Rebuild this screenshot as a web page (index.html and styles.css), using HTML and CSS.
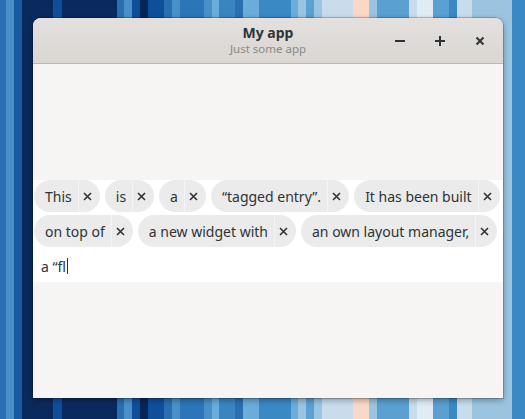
FILE: index.html
```html
<!DOCTYPE html>
<html lang="en">
<head>
<meta charset="utf-8">
<title>My app</title>
<link rel="stylesheet" href="styles.css">
</head>
<body>
<div class="window">
  <header class="headerbar">
    <div class="titles">
      <div class="title">My app</div>
      <div class="subtitle">Just some app</div>
    </div>
    <div class="controls">
      <span class="ctl"><svg width="12" height="12" viewBox="0 0 12 12"><path d="M1 6h10" stroke="#2e3436" stroke-width="2"/></svg></span>
      <span class="ctl"><svg width="12" height="12" viewBox="0 0 12 12"><path d="M1 6h10M6 1v10" stroke="#2e3436" stroke-width="2"/></svg></span>
      <span class="ctl"><svg width="10" height="10" viewBox="0 0 10 10"><path d="M1.5 1.5l7 7M8.5 1.5l-7 7" stroke="#2e3436" stroke-width="2"/></svg></span>
    </div>
  </header>
  <main class="content">
    <div class="band">
      <div class="tags">
        <div class="tag"><span class="label">This</span><span class="rm"><svg width="9" height="9" viewBox="0 0 9 9"><path d="M1 1l7 7M8 1l-7 7" stroke="#2e3436" stroke-width="1.6"/></svg></span></div>
        <div class="tag"><span class="label">is</span><span class="rm"><svg width="9" height="9" viewBox="0 0 9 9"><path d="M1 1l7 7M8 1l-7 7" stroke="#2e3436" stroke-width="1.6"/></svg></span></div>
        <div class="tag"><span class="label">a</span><span class="rm"><svg width="9" height="9" viewBox="0 0 9 9"><path d="M1 1l7 7M8 1l-7 7" stroke="#2e3436" stroke-width="1.6"/></svg></span></div>
        <div class="tag"><span class="label">“tagged entry”.</span><span class="rm"><svg width="9" height="9" viewBox="0 0 9 9"><path d="M1 1l7 7M8 1l-7 7" stroke="#2e3436" stroke-width="1.6"/></svg></span></div>
        <div class="tag"><span class="label">It has been built</span><span class="rm"><svg width="9" height="9" viewBox="0 0 9 9"><path d="M1 1l7 7M8 1l-7 7" stroke="#2e3436" stroke-width="1.6"/></svg></span></div>
        <div class="tag"><span class="label">on top of</span><span class="rm"><svg width="9" height="9" viewBox="0 0 9 9"><path d="M1 1l7 7M8 1l-7 7" stroke="#2e3436" stroke-width="1.6"/></svg></span></div>
        <div class="tag"><span class="label">a new widget with</span><span class="rm"><svg width="9" height="9" viewBox="0 0 9 9"><path d="M1 1l7 7M8 1l-7 7" stroke="#2e3436" stroke-width="1.6"/></svg></span></div>
        <div class="tag"><span class="label">an own layout manager,</span><span class="rm"><svg width="9" height="9" viewBox="0 0 9 9"><path d="M1 1l7 7M8 1l-7 7" stroke="#2e3436" stroke-width="1.6"/></svg></span></div>
        <div class="entry"><span class="typed">a “fl</span><span class="cursor"></span></div>
      </div>
    </div>
  </main>
</div>
</body>
</html>
```
FILE: styles.css
```css
html, body {
  margin: 0;
  height: 100%;
}
body {
  padding: 18px 0 0 33px;
  box-sizing: border-box;
  font-family: "Noto Sans", "DejaVu Sans", sans-serif;
  color: #2e3436;
  background: linear-gradient(to right,
    #2a6fb0 0 6px, #4a90c8 6px 14px, #1a5aa0 14px 22px, #0a2a5e 22px 53px,
    #0f4f9a 53px 62px, #0a2a5e 62px 117px, #2a6fb0 117px 124px, #4a90c8 124px 132px,
    #0f4f9a 132px 140px, #082558 140px 148px, #0f4f9a 148px 164px, #2a6fb0 164px 172px,
    #4a90c8 172px 180px, #2c75b8 180px 204px, #4a90c8 204px 212px, #6aacda 212px 219px,
    #3a85c0 219px 235px, #2a6fb0 235px 243px, #6aacda 243px 259px, #3a88c4 259px 291px,
    #6aacda 291px 298px, #9ac4e0 298px 306px, #5aa0d0 306px 314px, #9ac4e0 314px 322px,
    #c8dcec 322px 353px, #fad8c8 353px 369px, #9ac4e0 369px 377px, #5aa0d0 377px 409px,
    #c8dcec 409px 417px, #e0ecf4 417px 433px, #5aa0d0 433px 449px, #3a88c4 449px 457px,
    #c8dcec 457px 472px, #9ac4e0 472px 512px, #3a88c4 512px 525px);
}
.window {
  width: 470px;
  height: 380px;
  display: flex;
  flex-direction: column;
  border-radius: 8px 8px 0 0;
  overflow: hidden;
  box-shadow: 0 2px 6px rgba(0,0,0,0.35), 0 0 0 1px rgba(0,0,0,0.18);
  background: #f6f5f4;
}
.headerbar {
  height: 45px;
  flex: none;
  display: flex;
  align-items: center;
  justify-content: center;
  position: relative;
  background: linear-gradient(#e3e0dd, #dad6d2);
  border-bottom: 1px solid #bfb8b1;
}
.titles {
  text-align: center;
  line-height: 1;
}
.title {
  font-size: 14px;
  font-weight: bold;
  color: #2e3436;
}
.subtitle {
  font-size: 11.5px;
  color: #888a85;
  margin-top: 3px;
}
.controls {
  position: absolute;
  right: 3px;
  top: 0;
  height: 45px;
  display: flex;
  align-items: center;
}
.ctl {
  width: 40px;
  height: 34px;
  display: flex;
  align-items: center;
  justify-content: center;
}
.content {
  flex: 1;
  display: flex;
  flex-direction: column;
  justify-content: center;
}
.band {
  background: #ffffff;
  padding: 0 1px;
  height: 102px;
  box-sizing: border-box;
}
.tags {
  display: flex;
  flex-wrap: wrap;
  column-gap: 5px;
  row-gap: 3px;
}
.tag {
  height: 32px;
  display: flex;
  align-items: center;
  border-radius: 16px;
  background: #ebebeb;
  padding-left: 11px;
  font-size: 14px;
}
.rm {
  margin-left: 6px;
  width: 22px;
  height: 32px;
  box-sizing: border-box;
  border-left: 1px solid rgba(255,255,255,0.5);
  display: flex;
  align-items: center;
  padding-left: 4px;
}
.rm svg { display: block; }
.entry {
  flex: 1 0 200px;
  height: 32px;
  display: flex;
  align-items: center;
  padding-left: 7px;
  font-size: 14px;
}
.cursor {
  width: 1px;
  height: 16px;
  background: #2e3436;
  margin-left: 1px;
}
```
